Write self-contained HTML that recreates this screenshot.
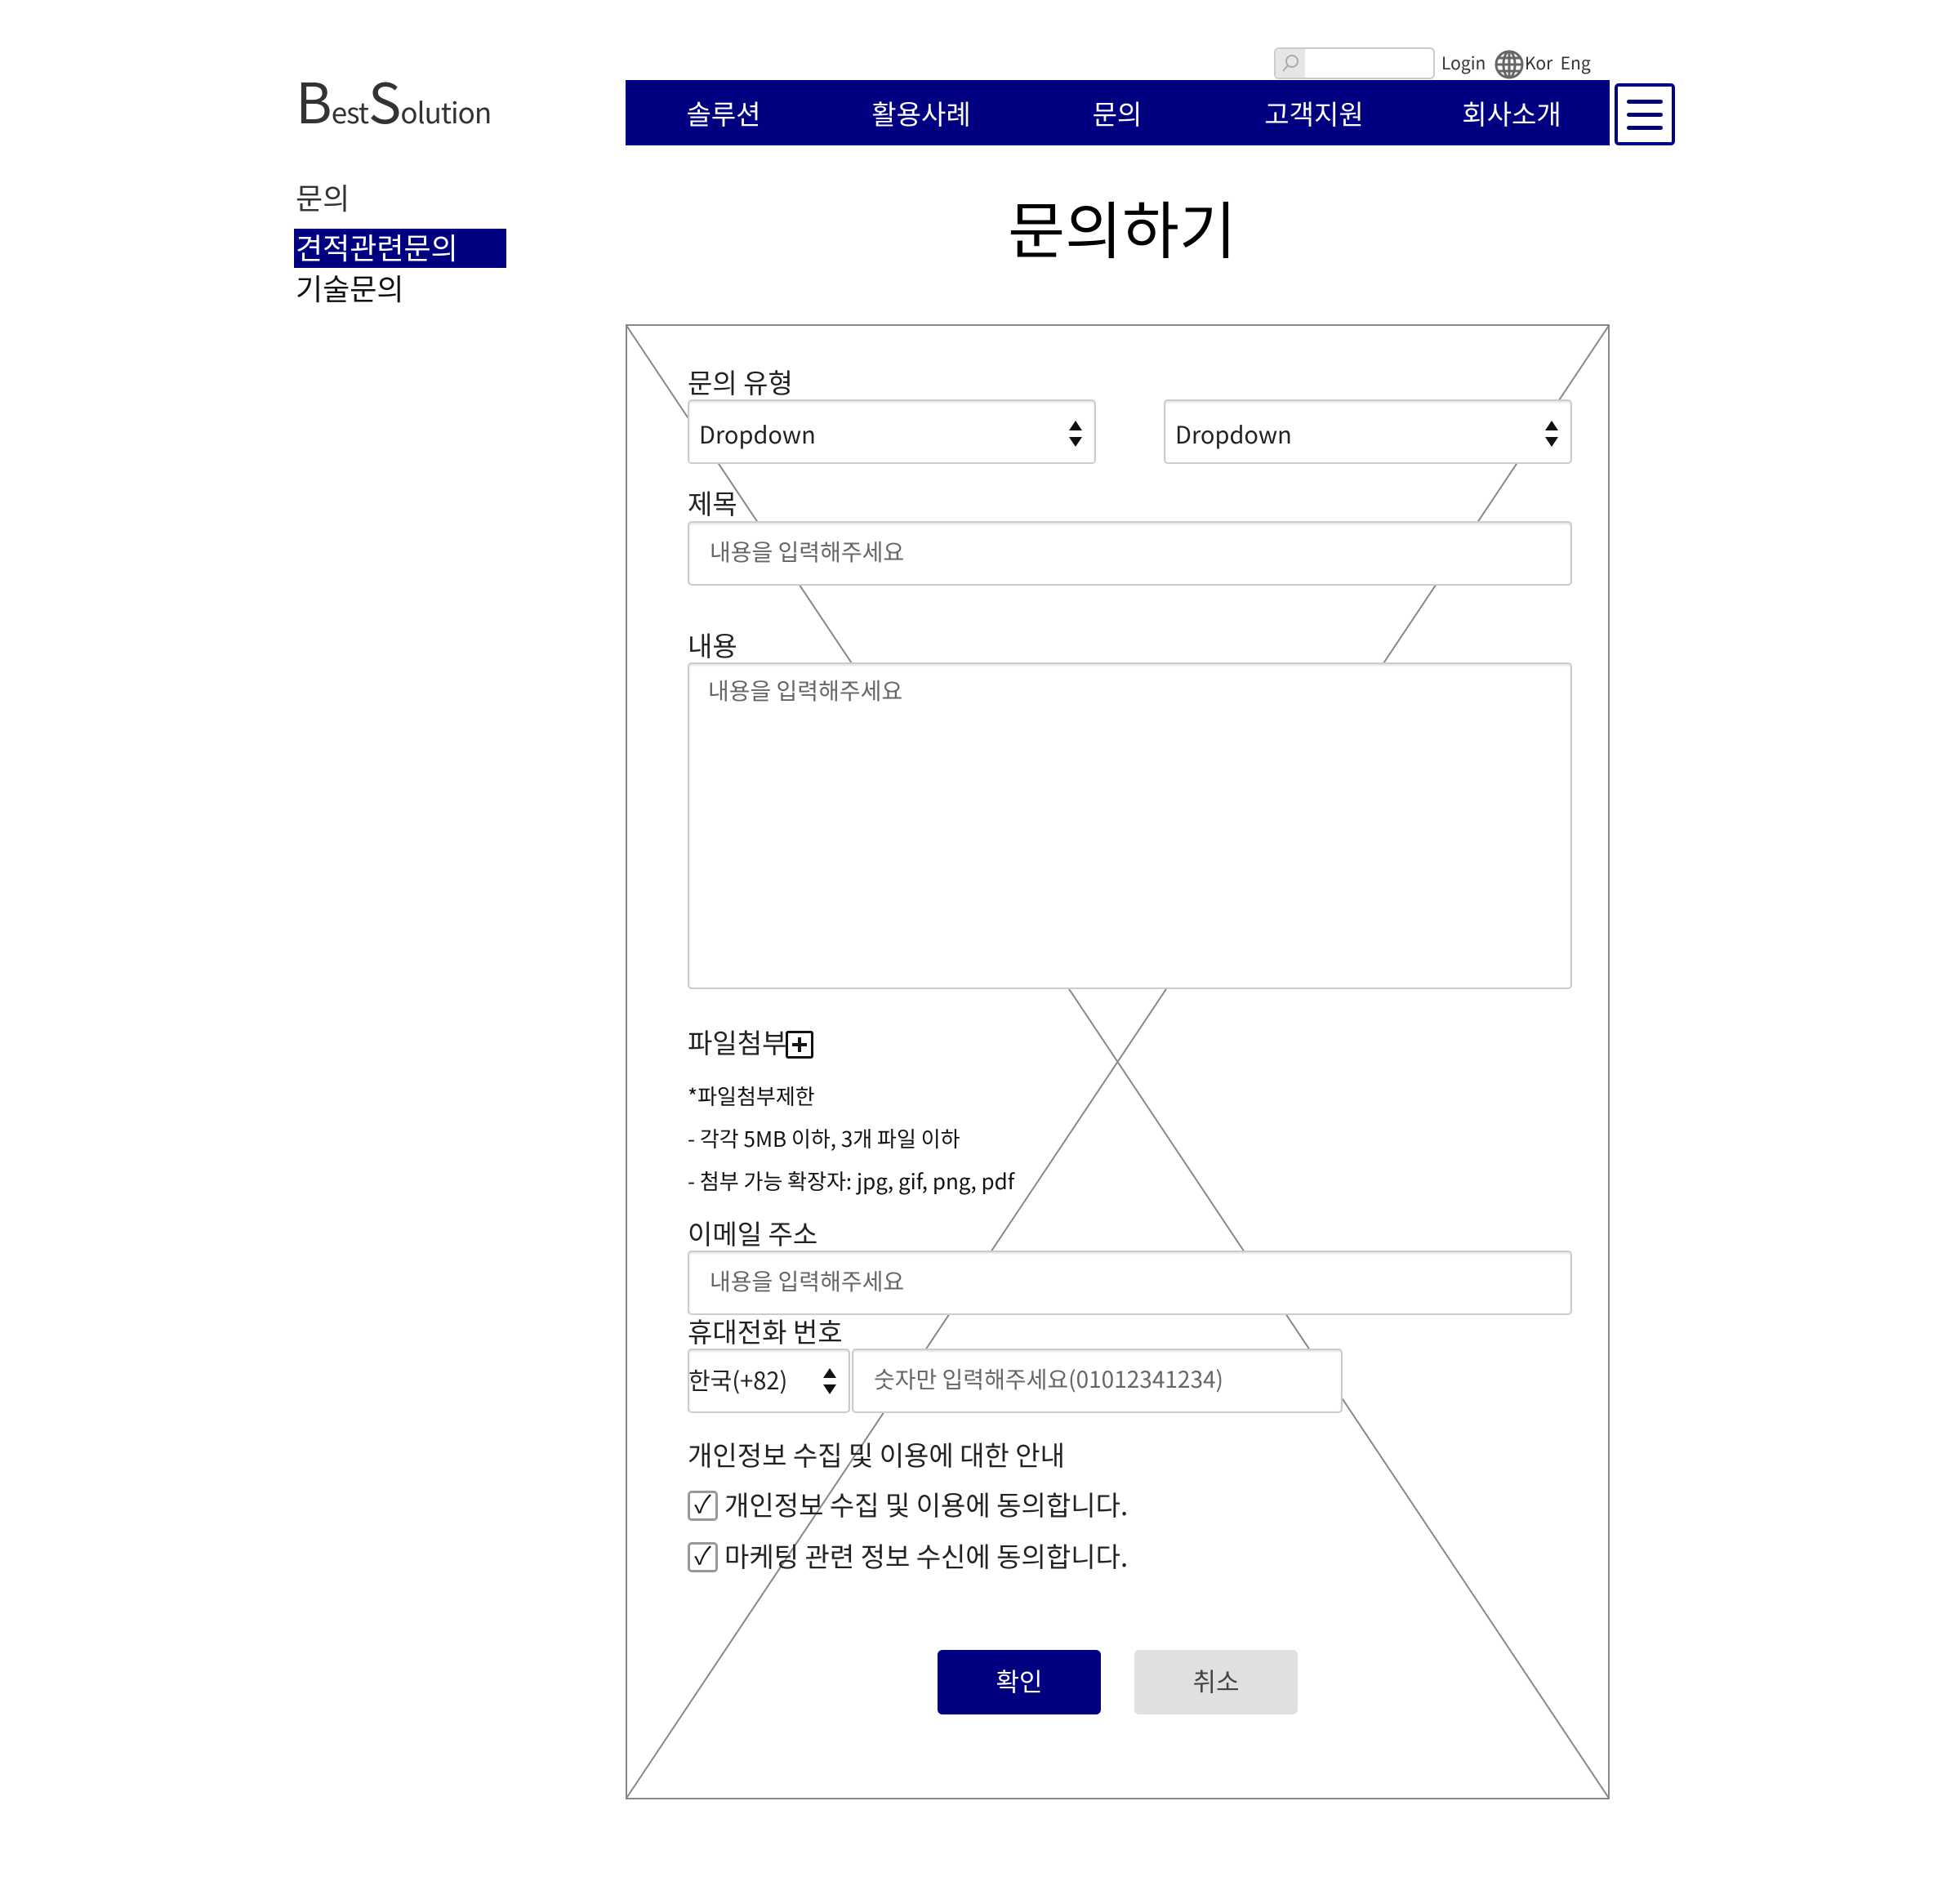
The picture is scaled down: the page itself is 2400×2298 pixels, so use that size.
<!DOCTYPE html>
<html><head><meta charset="utf-8"><style>
*{margin:0;padding:0;box-sizing:border-box}
body{width:2400px;height:2298px;background:#fff;position:relative;overflow:hidden;font-family:"Liberation Sans","Noto Sans CJK KR",sans-serif;color:#222}
.a{position:absolute;white-space:nowrap}
.kr{font-family:"Noto Sans CJK KR","Liberation Sans",sans-serif}
.inp{position:absolute;background:#fff;border:2px solid #ccc;border-radius:5px;box-shadow:inset 0 2px 2px #e4e4e4}
.ph{position:absolute;color:#666;font-size:28px;font-family:"Noto Sans CJK KR",sans-serif;white-space:nowrap}
.lbl{position:absolute;font-size:33px;color:#222;font-family:"Noto Sans CJK KR",sans-serif;white-space:nowrap;line-height:1}
.arr{position:absolute;width:0;height:0;border-left:8px solid transparent;border-right:8px solid transparent}
.cb{position:absolute;width:37px;height:37px;border:3px solid #999;border-radius:5px;background:#fff;font-size:30px;line-height:30px;text-align:center;color:#111}
</style></head><body>

<!-- logo -->
<div class="a kr" style="left:362px;top:88px;color:#333;font-size:68px;line-height:1;letter-spacing:-1px">B<span style="font-size:35px">est</span>S<span style="font-size:35px">olution</span></div>

<!-- search/login -->
<div class="a" style="left:1560px;top:58px;width:197px;height:39px;border:2px solid #ccc;border-radius:6px;background:#fff"></div>
<div class="a" style="left:1562px;top:60px;width:36px;height:35px;background:#e6e6e6;border-radius:5px 0 0 5px"></div>
<svg class="a" style="left:1566px;top:64px" width="28" height="28" viewBox="0 0 28 28"><circle cx="16" cy="11" r="7" fill="none" stroke="#aaa" stroke-width="2"/><line x1="11" y1="16" x2="5" y2="23" stroke="#aaa" stroke-width="2"/></svg>
<div class="a kr" style="left:1765px;top:62px;font-size:21px;color:#333">Login</div>
<svg class="a" style="left:1829px;top:60px" width="38" height="38" viewBox="0 0 38 38" fill="none" stroke="#666" stroke-width="3"><circle cx="19" cy="19" r="16"/><ellipse cx="19" cy="19" rx="7" ry="16"/><line x1="3" y1="19" x2="35" y2="19"/><line x1="6" y1="11" x2="32" y2="11"/><line x1="6" y1="27" x2="32" y2="27"/><line x1="19" y1="3" x2="19" y2="35"/></svg>
<div class="a kr" style="left:1867px;top:62px;font-size:21px;color:#333">Kor&nbsp; Eng</div>

<!-- nav -->
<div class="a" style="left:766px;top:98px;width:1205px;height:80px;background:#000080"></div>
<div class="a kr" style="left:886px;top:138px;transform:translate(-50%,-50%);color:#fff;font-size:33px">솔루션</div>
<div class="a kr" style="left:1128px;top:138px;transform:translate(-50%,-50%);color:#fff;font-size:33px">활용사례</div>
<div class="a kr" style="left:1368px;top:138px;transform:translate(-50%,-50%);color:#fff;font-size:33px">문의</div>
<div class="a kr" style="left:1609px;top:138px;transform:translate(-50%,-50%);color:#fff;font-size:33px">고객지원</div>
<div class="a kr" style="left:1851px;top:138px;transform:translate(-50%,-50%);color:#fff;font-size:33px">회사소개</div>
<div class="a" style="left:1977px;top:102px;width:74px;height:76px;border:4px solid #000080;border-radius:5px;background:#fff"></div>
<div class="a" style="left:1992px;top:122px;width:44px;height:5px;background:#000080;border-radius:3px"></div>
<div class="a" style="left:1992px;top:138px;width:44px;height:5px;background:#000080;border-radius:3px"></div>
<div class="a" style="left:1992px;top:154px;width:44px;height:5px;background:#000080;border-radius:3px"></div>

<!-- sidebar -->
<div class="a kr" style="left:362px;top:218px;font-size:36px;line-height:46px;color:#333">문의</div>
<div class="a" style="left:360px;top:280px;width:260px;height:48px;background:#000080"></div>
<div class="a kr" style="left:362px;top:279px;font-size:36px;line-height:46px;color:#fff">견적관련문의</div>
<div class="a kr" style="left:362px;top:329px;font-size:36px;line-height:46px;color:#111">기술문의</div>

<!-- title -->
<div class="a kr" style="left:1374px;top:277px;transform:translate(-50%,-50%);font-size:76px;color:#000">문의하기</div>

<!-- form box -->
<div class="a" style="left:766px;top:397px;width:1205px;height:1806px;border:2px solid #888"></div>
<svg class="a" style="left:766px;top:397px" width="1205" height="1806"><line x1="0" y1="0" x2="1205" y2="1806" stroke="#888" stroke-width="2"/><line x1="1205" y1="0" x2="0" y2="1806" stroke="#888" stroke-width="2"/></svg>

<div class="lbl" style="left:842px;top:451px">문의 유형</div>
<div class="inp" style="left:842px;top:489px;width:500px;height:79px"></div>
<div class="ph" style="left:856px;top:510px;color:#222;font-size:29px">Dropdown</div>
<div class="arr" style="left:1309px;top:515px;border-bottom:12px solid #111"></div>
<div class="arr" style="left:1309px;top:535px;border-top:12px solid #111"></div>
<div class="inp" style="left:1425px;top:489px;width:500px;height:79px"></div>
<div class="ph" style="left:1439px;top:510px;color:#222;font-size:29px">Dropdown</div>
<div class="arr" style="left:1892px;top:515px;border-bottom:12px solid #111"></div>
<div class="arr" style="left:1892px;top:535px;border-top:12px solid #111"></div>

<div class="lbl" style="left:842px;top:599px">제목</div>
<div class="inp" style="left:842px;top:638px;width:1083px;height:79px"></div>
<div class="ph" style="left:869px;top:655px">내용을 입력해주세요</div>

<div class="lbl" style="left:842px;top:773px">내용</div>
<div class="inp" style="left:842px;top:811px;width:1083px;height:400px"></div>
<div class="ph" style="left:867px;top:825px">내용을 입력해주세요</div>

<div class="lbl" style="left:842px;top:1259px">파일첨부</div>
<div class="a" style="left:962px;top:1262px;width:34px;height:34px;border:3px solid #111;border-radius:3px"></div>
<div class="a" style="left:970px;top:1277px;width:18px;height:4px;background:#111"></div>
<div class="a" style="left:977px;top:1270px;width:4px;height:18px;background:#111"></div>

<div class="a kr" style="left:842px;top:1323px;font-size:26px;color:#111">*파일첨부제한</div>
<div class="a kr" style="left:842px;top:1375px;font-size:26px;color:#111">- 각각 5MB 이하, 3개 파일 이하</div>
<div class="a kr" style="left:842px;top:1427px;font-size:26px;color:#111">- 첨부 가능 확장자: jpg, gif, png, pdf</div>

<div class="lbl" style="left:842px;top:1493px">이메일 주소</div>
<div class="inp" style="left:842px;top:1531px;width:1083px;height:79px"></div>
<div class="ph" style="left:869px;top:1548px">내용을 입력해주세요</div>

<div class="lbl" style="left:842px;top:1613px">휴대전화 번호</div>
<div class="inp" style="left:842px;top:1651px;width:199px;height:79px"></div>
<div class="ph" style="left:843px;top:1668px;color:#222;font-size:29px">한국(+82)</div>
<div class="arr" style="left:1008px;top:1675px;border-bottom:12px solid #111"></div>
<div class="arr" style="left:1008px;top:1695px;border-top:12px solid #111"></div>
<div class="inp" style="left:1043px;top:1651px;width:601px;height:79px"></div>
<div class="ph" style="left:1070px;top:1668px">숫자만 입력해주세요(01012341234)</div>

<div class="lbl" style="left:842px;top:1764px">개인정보 수집 및 이용에 대한 안내</div>
<div class="cb" style="left:842px;top:1825px">✓</div>
<div class="lbl" style="left:887px;top:1825px">개인정보 수집 및 이용에 동의합니다.</div>
<div class="cb" style="left:842px;top:1888px">✓</div>
<div class="lbl" style="left:887px;top:1888px">마케팅 관련 정보 수신에 동의합니다.</div>

<div class="a" style="left:1148px;top:2020px;width:200px;height:79px;background:#000080;border-radius:6px"></div>
<div class="a kr" style="left:1248px;top:2057px;transform:translate(-50%,-50%);font-size:31px;color:#fff">확인</div>
<div class="a" style="left:1389px;top:2020px;width:200px;height:79px;background:#e0e0e0;border-radius:6px"></div>
<div class="a kr" style="left:1489px;top:2057px;transform:translate(-50%,-50%);font-size:31px;color:#444">취소</div>

</body></html>
